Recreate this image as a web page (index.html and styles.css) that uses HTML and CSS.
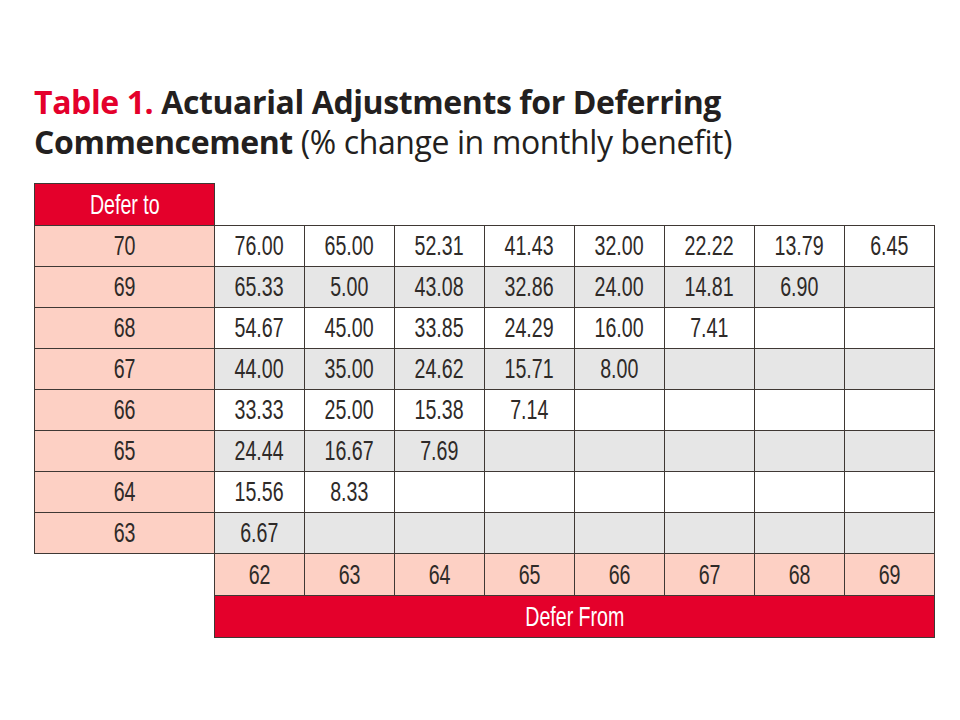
FILE: index.html
```html
<!DOCTYPE html>
<html lang="en">
<head>
<meta charset="utf-8">
<title>Table 1. Actuarial Adjustments for Deferring Commencement</title>
<link rel="stylesheet" href="styles.css">
</head>
<body>
<main class="page">
  <h1 class="title"><span class="title-num">Table 1.</span> Actuarial Adjustments for Deferring<br>Commencement <span class="title-note">(% change in monthly benefit)</span></h1>
  <table class="adj">
    <tr class="head-row">
      <th class="lab-red"><span class="c">Defer to</span></th>
      <td class="blank" colspan="8"></td>
    </tr>
    <tr class="w"><th class="lab"><span class="c">70</span></th><td><span class="c">76.00</span></td><td><span class="c">65.00</span></td><td><span class="c">52.31</span></td><td><span class="c">41.43</span></td><td><span class="c">32.00</span></td><td><span class="c">22.22</span></td><td><span class="c">13.79</span></td><td><span class="c">6.45</span></td></tr>
    <tr class="g"><th class="lab"><span class="c">69</span></th><td><span class="c">65.33</span></td><td><span class="c">5.00</span></td><td><span class="c">43.08</span></td><td><span class="c">32.86</span></td><td><span class="c">24.00</span></td><td><span class="c">14.81</span></td><td><span class="c">6.90</span></td><td></td></tr>
    <tr class="w"><th class="lab"><span class="c">68</span></th><td><span class="c">54.67</span></td><td><span class="c">45.00</span></td><td><span class="c">33.85</span></td><td><span class="c">24.29</span></td><td><span class="c">16.00</span></td><td><span class="c">7.41</span></td><td></td><td></td></tr>
    <tr class="g"><th class="lab"><span class="c">67</span></th><td><span class="c">44.00</span></td><td><span class="c">35.00</span></td><td><span class="c">24.62</span></td><td><span class="c">15.71</span></td><td><span class="c">8.00</span></td><td></td><td></td><td></td></tr>
    <tr class="w"><th class="lab"><span class="c">66</span></th><td><span class="c">33.33</span></td><td><span class="c">25.00</span></td><td><span class="c">15.38</span></td><td><span class="c">7.14</span></td><td></td><td></td><td></td><td></td></tr>
    <tr class="g"><th class="lab"><span class="c">65</span></th><td><span class="c">24.44</span></td><td><span class="c">16.67</span></td><td><span class="c">7.69</span></td><td></td><td></td><td></td><td></td><td></td></tr>
    <tr class="w"><th class="lab"><span class="c">64</span></th><td><span class="c">15.56</span></td><td><span class="c">8.33</span></td><td></td><td></td><td></td><td></td><td></td><td></td></tr>
    <tr class="g"><th class="lab"><span class="c">63</span></th><td><span class="c">6.67</span></td><td></td><td></td><td></td><td></td><td></td><td></td><td></td></tr>
    <tr class="from-row">
      <td class="blank"></td>
      <th class="lab"><span class="c">62</span></th><th class="lab"><span class="c">63</span></th><th class="lab"><span class="c">64</span></th><th class="lab"><span class="c">65</span></th><th class="lab"><span class="c">66</span></th><th class="lab"><span class="c">67</span></th><th class="lab"><span class="c">68</span></th><th class="lab"><span class="c">69</span></th>
    </tr>
    <tr class="foot-row">
      <td class="blank"></td>
      <th class="lab-red" colspan="8"><span class="c">Defer From</span></th>
    </tr>
  </table>
</main>
</body>
</html>
```

FILE: styles.css
```css
html, body {
  margin: 0;
  padding: 0;
  background: #ffffff;
}

.page {
  padding: 82px 0 0 34px;
}

.title {
  margin: 0;
  font-family: "Open Sans", "Liberation Sans", sans-serif;
  font-weight: 700;
  font-size: 32px;
  line-height: 40px;
  color: #231f20;
  letter-spacing: -0.4px;
}

.title-num {
  color: #e4002b;
}

.title-note {
  font-weight: 400;
}

.adj {
  margin-top: 21px;
  border-collapse: collapse;
  font-family: "Liberation Sans", Arial, sans-serif;
  font-size: 28px;
  color: #2e2a28;
  table-layout: fixed;
}

.adj .c {
  display: inline-block;
  transform: scaleX(0.7);
  transform-origin: center;
  white-space: nowrap;
}

.adj th,
.adj td {
  border: 1px solid #3f3834;
  padding: 0;
  height: 40px;
  width: 89px;
  text-align: center;
  font-weight: 400;
  vertical-align: middle;
  line-height: 1;
}

.adj .lab {
  background: #fdd0c4;
}

.adj tr > th.lab:first-child {
  width: 179px;
}

.adj .lab-red {
  background: #e4002b;
  color: #ffffff;
  width: 179px;
}

.head-row th,
.head-row td,
.from-row th,
.from-row td,
.foot-row th,
.foot-row td {
  height: 41px;
}

.adj .blank {
  border: none;
  background: transparent;
}

.adj .w td {
  background: #ffffff;
}

.adj .g td {
  background: #e6e6e6;
}

.head-row .blank {
  border-bottom: 1px solid #3f3834;
}
```
